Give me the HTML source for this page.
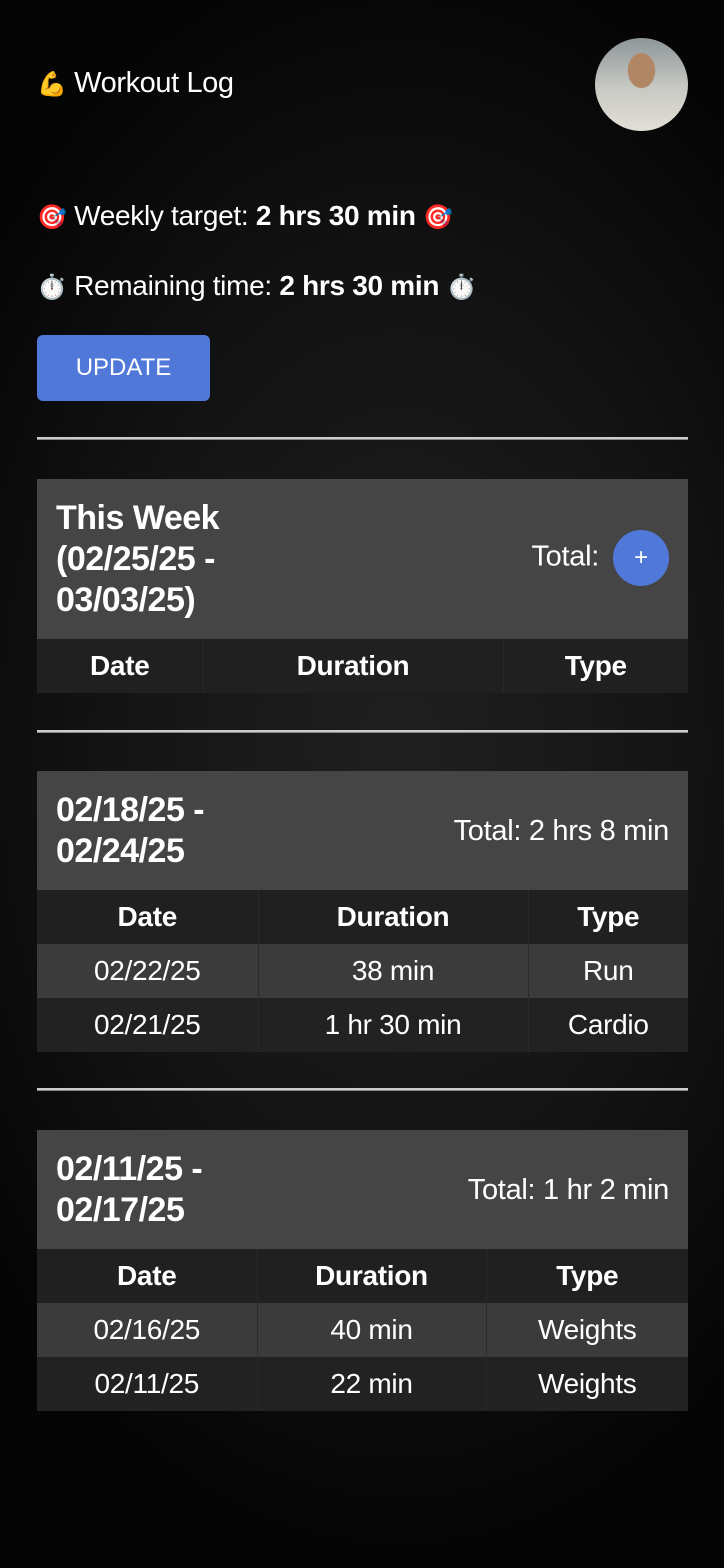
<!DOCTYPE html>
<html><head><meta charset="utf-8"><style>
*{margin:0;padding:0;box-sizing:border-box}
body{width:724px;height:1568px;overflow:hidden;font-family:"Liberation Sans",sans-serif;color:#fff;
background:radial-gradient(ellipse 520px 800px at 400px 750px,#1f1f1f 0%,#141414 55%,#050505 100%);position:relative}
.a{position:absolute}
.em{font-size:24px}
.t{font-size:29px;left:37px;top:67px;letter-spacing:-0.4px}
.av{left:595px;top:38px;width:93px;height:93px;border-radius:50%;overflow:hidden;background:radial-gradient(ellipse 14px 18px at 50% 35%,#b08664 0 95%,transparent 100%),linear-gradient(#8e9699,#c9cac4 55%,#e2dfd6)}
.l{font-size:28px;left:37px;letter-spacing:-0.3px}
.btn{left:37px;top:335px;width:173px;height:66px;background:#4f78d8;border-radius:6px;font-size:24px;text-align:center;line-height:66px}
.hr{left:37px;width:651px;height:3px;background:#ccc;border-bottom:1px solid #888}
.card{left:37px;width:651px}
.hd{background:#454545;position:relative;padding:0 19px}
.hd h2{font-size:34px;line-height:41px;font-weight:bold;letter-spacing:-0.5px}
.tot{position:absolute;right:19px;font-size:29px;letter-spacing:-0.3px}
table{width:651px;border-collapse:collapse;font-size:28px;text-align:center;letter-spacing:-0.3px}
th{background:#202020;height:54px;font-weight:bold}
td{height:54px}
th+th,td+td{border-left:1px solid #2a2a2a}
tr.odd td{background:#3b3b3b}
tr.even td{background:#222}
.plus{display:inline-block;width:56px;height:56px;border-radius:50%;background:#4f78d8;text-align:center;line-height:56px;font-size:24px;vertical-align:middle;margin-left:14px}
</style></head><body>
<div class="a t"><span class="em">💪</span> Workout Log</div>
<div class="a av"></div>
<div class="a l" style="top:200px"><span class="em">🎯</span> Weekly target: <b>2 hrs 30 min</b> <span class="em">🎯</span></div>
<div class="a l" style="top:270px"><span class="em">⏱️</span> Remaining time: <b>2 hrs 30 min</b> <span class="em">⏱️</span></div>
<div class="a btn">UPDATE</div>
<div class="a hr" style="top:437px"></div>
<div class="a card" style="top:479px">
<div class="hd" style="height:160px;padding-top:19px"><h2>This Week<br>(02/25/25 -<br>03/03/25)</h2><div class="tot" style="top:51px">Total:<span class="plus">+</span></div></div>
<table><tr><th style="width:166px">Date</th><th style="width:300px">Duration</th><th>Type</th></tr></table>
</div>
<div class="a hr" style="top:730px"></div>
<div class="a card" style="top:771px">
<div class="hd" style="height:119px;padding-top:19px"><h2>02/18/25 -<br>02/24/25</h2><div class="tot" style="top:44px">Total: 2 hrs 8 min</div></div>
<table><tr><th style="width:221px">Date</th><th style="width:270px">Duration</th><th>Type</th></tr>
<tr class="odd"><td>02/22/25</td><td>38 min</td><td>Run</td></tr>
<tr class="even"><td>02/21/25</td><td>1 hr 30 min</td><td>Cardio</td></tr></table>
</div>
<div class="a hr" style="top:1088px"></div>
<div class="a card" style="top:1130px">
<div class="hd" style="height:119px;padding-top:19px"><h2>02/11/25 -<br>02/17/25</h2><div class="tot" style="top:44px">Total: 1 hr 2 min</div></div>
<table><tr><th style="width:220px">Date</th><th style="width:229px">Duration</th><th>Type</th></tr>
<tr class="odd"><td>02/16/25</td><td>40 min</td><td>Weights</td></tr>
<tr class="even"><td>02/11/25</td><td>22 min</td><td>Weights</td></tr></table>
</div>
</body></html>
